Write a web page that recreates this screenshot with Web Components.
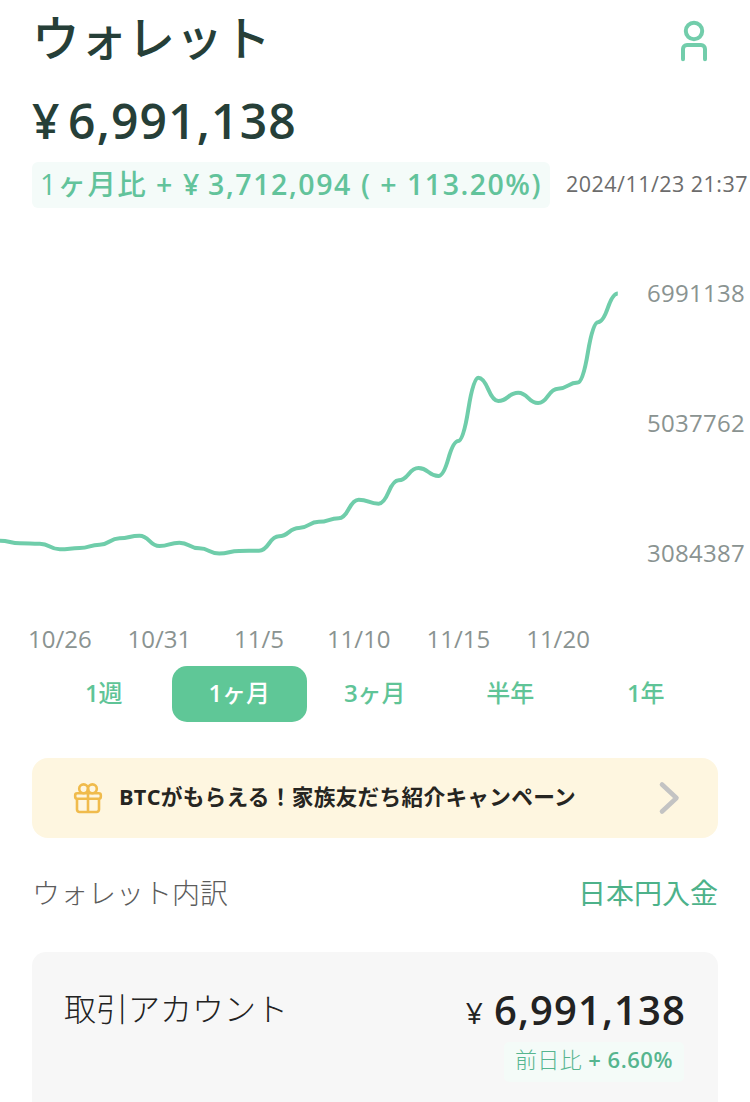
<!DOCTYPE html>
<html lang="ja">
<head>
<meta charset="utf-8">
<title>ウォレット</title>
<style>
    body {
        margin: 0;
        background: #fff;
        font-family: "Open Sans", "Noto Sans CJK JP", sans-serif;
    }
</style>
</head>
<body>
<wallet-page></wallet-page>
<script>
function define (name, html, setup) {
    const template = document.createElement('template')
    template.innerHTML = html.trim()

    customElements.define(name, class extends HTMLElement {
        constructor () {
            super()
            this.attachShadow({ mode: 'open' })
            this.shadowRoot.appendChild(template.content.cloneNode(true))
        }

        connectedCallback () {
            if (setup) setup(this, this.shadowRoot)
        }
    })
}

// text spread with letter-spacing to fill the given width
define('tracked-text', `
    <style>
        :host { display: block; }
        span { white-space: pre; }
    </style>
    <span><slot></slot></span>
`, (host, root) => {
    const width = Number(host.getAttribute('width'))
    const span = root.querySelector('span')
    const nodes = root.querySelector('slot').assignedNodes({ flatten: true })
    const length = nodes.map(node => node.textContent).join('').length
    const natural = span.getBoundingClientRect().width
    host.style.width = width + 'px'
    if (length) span.style.letterSpacing = (width - natural) / length + 'px'
})

define('user-icon', `
    <style>
        :host { display: block; width: 28px; height: 42px; }
        svg { display: block; }
    </style>
    <svg width="28" height="42" viewBox="0 0 28 42" fill="none" stroke="#72cdab" stroke-width="4" stroke-linecap="round">
        <circle cx="14" cy="11" r="8.2"/>
        <path d="M3 39.2V29a4 4 0 0 1 4-4h14a4 4 0 0 1 4 4v10.2"/>
    </svg>
`)

define('gift-icon', `
    <style>
        :host { display: block; width: 30px; height: 32px; }
        svg { display: block; }
    </style>
    <svg width="30" height="32" viewBox="0 0 30 32" fill="none" stroke="#f0bb4c" stroke-width="2.6" stroke-linejoin="round">
        <rect x="2.2" y="11.2" width="25.6" height="5.6" rx="2"/>
        <path d="M4 16.8V27.6a2.4 2.4 0 0 0 2.4 2.4h17.2A2.4 2.4 0 0 0 26 27.6V16.8M15 7v23"/>
        <circle cx="10.6" cy="6.8" r="4.4"/>
        <circle cx="19.4" cy="6.8" r="4.4"/>
    </svg>
`)

define('wallet-header', `
    <style>
        :host {
            display: flex;
            justify-content: space-between;
            align-items: flex-start;
            height: 76px;
            padding: 0 42px 0 32px;
        }
        .title { font-size: 47.5px; line-height: 75px; font-weight: 500; color: #263f38; }
        user-icon { margin-top: 20px; }
    </style>
    <tracked-text class="title" width="239"><slot></slot></tracked-text>
    <user-icon></user-icon>
`)

define('wallet-summary', `
    <style>
        :host { display: block; padding-left: 32px; }
        .total {
            display: flex;
            height: 86px;
            line-height: 89px;
            font-size: 48px;
            font-weight: 600;
            color: #263f38;
        }
        .row { display: flex; align-items: center; }
        .change {
            display: flex;
            box-sizing: border-box;
            width: 518px;
            height: 46px;
            padding-left: 8px;
            border-radius: 6px;
            background: #f4fbf9;
            color: #62c39b;
            font-size: 28.5px;
            line-height: 45px;
            font-weight: 600;
        }
        .label { font-weight: 500; }
        .gain { margin-left: 7px; }
        .date { margin-left: 16px; font-size: 21.5px; line-height: 44px; height: 46px; color: #6c6c6c; }
    </style>
    <div class="total">
        <tracked-text width="36">¥</tracked-text>
        <tracked-text width="229">6,991,138</tracked-text>
    </div>
    <div class="row">
        <div class="change">
            <tracked-text class="label" width="107">1ヶ月比</tracked-text>
            <tracked-text width="54"> + ¥</tracked-text>
            <tracked-text class="gain" width="144">3,712,094</tracked-text>
            <tracked-text width="190"> ( + 113.20%)</tracked-text>
        </div>
        <tracked-text class="date" width="182">2024/11/23 21:37</tracked-text>
    </div>
`)

define('price-chart', `
    <style>
        :host {
            display: grid;
            grid-template-columns: 647px 1fr;
            grid-template-rows: 404px 54px;
            color: #8a9391;
            font-size: 24px;
        }
        svg { display: block; }
        .prices { padding-top: 20px; }
        .prices tracked-text { height: 130px; line-height: 130px; }
        .dates { display: flex; padding-left: 10px; }
        .dates span { width: 99.65px; text-align: center; line-height: 54px; }
    </style>
    <svg width="647" height="404" viewBox="0 208 647 404">
        <path fill="none" stroke="#6fcdaa" stroke-width="4"/>
    </svg>
    <div class="prices">
        <tracked-text width="98">6991138</tracked-text>
        <tracked-text width="98">5037762</tracked-text>
        <tracked-text width="98">3084387</tracked-text>
    </div>
    <div class="dates">
        <span>10/26</span><span>10/31</span><span>11/5</span><span>11/10</span><span>11/15</span><span>11/20</span>
    </div>
`, (host, root) => {
    const values = [
        540.7, 543.3, 543.8, 549.3, 548, 544.7, 538.3, 535.7, 546, 542.7, 548.3,
        553.5, 551, 550.7, 536.3, 528, 521.8, 518.3, 499.7, 503.7, 480.3, 468,
        476, 441, 377.7, 401, 392.7, 403, 388.7, 382.5, 322.3, 293.5
    ]
    const step = 19.93
    let x = 617.8 - step * (values.length - 1)
    let d = `M${x} ${values[0]}`
    // two quads per day, flat at every point
    for (let i = 1; i < values.length; i++) {
        const mid = (values[i - 1] + values[i]) / 2
        d += `Q${x + step / 4} ${values[i - 1]} ${x + step / 2} ${mid}`
        d += `Q${x + step * 0.75} ${values[i]} ${x + step} ${values[i]}`
        x += step
    }
    root.querySelector('path').setAttribute('d', d)
})

define('range-tab', `
    <style>
        :host {
            display: block;
            width: 135.5px;
            height: 56px;
            border-radius: 15px;
            line-height: 54px;
            text-align: center;
            font-size: 24px;
            font-weight: 500;
            color: #5fc497;
        }
        :host([active]) { background: #5fc797; color: #fff; }
    </style>
    <slot></slot>
`)

define('range-tabs', `
    <style>
        :host { display: flex; padding-left: 36px; }
        b { font-weight: 600; }
    </style>
    <range-tab><b>1</b>週</range-tab>
    <range-tab active><b>1</b>ヶ月</range-tab>
    <range-tab><b>3</b>ヶ月</range-tab>
    <range-tab>半年</range-tab>
    <range-tab><b>1</b>年</range-tab>
`)

define('campaign-banner', `
    <style>
        :host {
            display: flex;
            align-items: center;
            height: 80px;
            margin: 36px 32px 0;
            box-sizing: border-box;
            padding: 0 36px 0 41px;
            border-radius: 16px;
            background: #fef6e0;
            color: #262521;
            font-size: 21.7px;
            font-weight: 700;
        }
        gift-icon { margin-right: 16px; }
        .text { line-height: 78px; height: 80px; }
        svg { margin-left: auto; }
    </style>
    <gift-icon></gift-icon>
    <tracked-text class="text" width="457"><slot></slot></tracked-text>
    <svg width="24" height="36" viewBox="0 0 24 36" fill="none" stroke="#c3c3c3" stroke-width="4.6" stroke-linecap="round" stroke-linejoin="round">
        <path d="M4 4.5L18.5 18L4 31.5"/>
    </svg>
`)

define('section-head', `
    <style>
        :host {
            display: flex;
            justify-content: space-between;
            height: 114px;
            padding: 0 32px;
            line-height: 111px;
            font-size: 28px;
        }
        .name { color: #5c5c5c; font-weight: 300; }
        .link { color: #4db28a; font-weight: 400; }
    </style>
    <span class="name"><slot></slot></span>
    <span class="link"><slot name="link"></slot></span>
`)

define('account-card', `
    <style>
        :host {
            display: flex;
            justify-content: space-between;
            align-items: flex-start;
            box-sizing: border-box;
            height: 150px;
            margin: 0 32px;
            padding: 0 34px 0 32px;
            border-radius: 14px 14px 0 0;
            background: #f7f7f7;
            color: #222;
        }
        .name { font-size: 32px; line-height: 114px; font-weight: 300; }
        .right { display: flex; flex-direction: column; align-items: flex-end; }
        .amount { display: flex; height: 90px; line-height: 116px; margin-right: -2px; }
        .yen { font-size: 30px; line-height: 121px; margin-right: 11px; }
        .value { font-size: 40px; font-weight: 600; }
        .change {
            display: flex;
            box-sizing: border-box;
            width: 180px;
            height: 40px;
            padding-left: 11px;
            border-radius: 5px;
            background: #f4fbf8;
            color: #56b58f;
            line-height: 35px;
            font-size: 22px;
        }
        .label { font-weight: 300; }
        .percent { font-weight: 600; }
    </style>
    <span class="name">取引アカウント</span>
    <div class="right">
        <div class="amount">
            <span class="yen">¥</span>
            <tracked-text class="value" width="192">6,991,138</tracked-text>
        </div>
        <div class="change">
            <tracked-text class="label" width="67">前日比</tracked-text>
            <tracked-text class="percent" width="91"> + 6.60%</tracked-text>
        </div>
    </div>
`)

define('wallet-page', `
    <style>
        :host { display: block; width: 750px; height: 1102px; overflow: hidden; }
    </style>
    <wallet-header>ウォレット</wallet-header>
    <wallet-summary></wallet-summary>
    <price-chart></price-chart>
    <range-tabs></range-tabs>
    <campaign-banner>BTCがもらえる！家族友だち紹介キャンペーン</campaign-banner>
    <section-head>ウォレット内訳<span slot="link">日本円入金</span></section-head>
    <account-card></account-card>
`)
</script>
</body>
</html>
